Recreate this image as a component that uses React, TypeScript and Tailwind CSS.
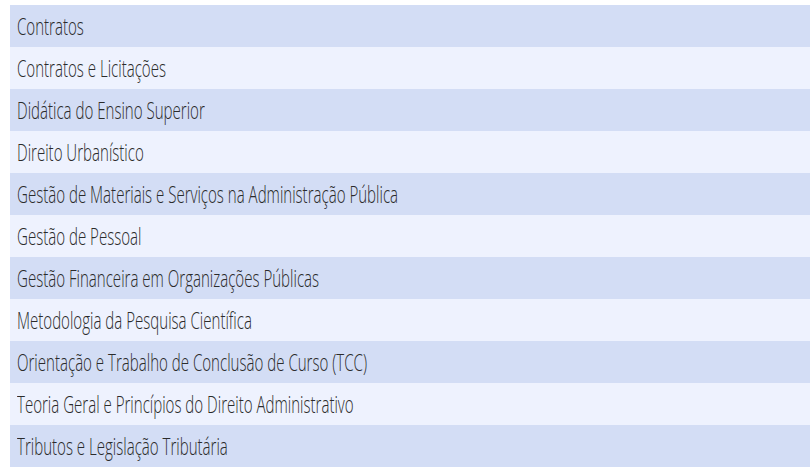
import React from 'react';

const COURSES = [
  'Contratos',
  'Contratos e Licitações',
  'Didática do Ensino Superior',
  'Direito Urbanístico',
  'Gestão de Materiais e Serviços na Administração Pública',
  'Gestão de Pessoal',
  'Gestão Financeira em Organizações Públicas',
  'Metodologia da Pesquisa Científica',
  'Orientação e Trabalho de Conclusão de Curso (TCC)',
  'Teoria Geral e Princípios do Direito Administrativo',
  'Tributos e Legislação Tributária',
];

export default function App() {
  return (
    <div className="min-h-screen bg-white pt-[5px] pl-[10px] overflow-hidden" style={{ fontFamily: '"Open Sans", sans-serif' }}>
      {/* Course list */}
      <ul className="w-[800px]">
        {COURSES.map((name, i) => (
          <li
            key={name}
            className={`h-[42px] flex items-center pl-[7px] ${i % 2 === 0 ? 'bg-[#d3ddf5]' : 'bg-[#eef2fe]'}`}
          >
            <span className="block whitespace-nowrap text-[23px] font-light leading-none text-[#2b2b2b] origin-left scale-x-[0.655]">
              {name}
            </span>
          </li>
        ))}
      </ul>
    </div>
  );
}
